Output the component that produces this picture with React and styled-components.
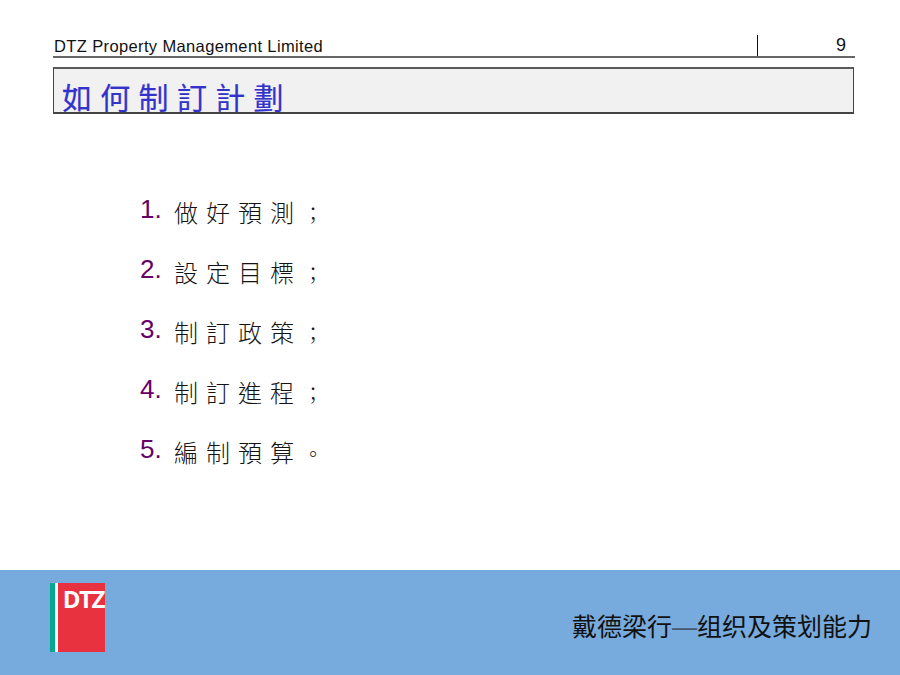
import React from 'react'
import styled, { createGlobalStyle } from 'styled-components'

const GlobalStyle = createGlobalStyle`
  html, body {
    margin: 0;
    padding: 0;
    background: #ffffff;
  }
`

const items = [
  { num: '1.', text: '做好預測', end: '；' },
  { num: '2.', text: '設定目標', end: '；' },
  { num: '3.', text: '制訂政策', end: '；' },
  { num: '4.', text: '制訂進程', end: '；' },
  { num: '5.', text: '編制預算', end: '。' },
]

const Slide = styled.div`
  width: 900px;
  height: 675px;
  display: flex;
  flex-direction: column;
  overflow: hidden;
  background: #ffffff;
`

const Main = styled.div`
  flex: 1;
  padding: 35px 45px 0 53px;
`

const Header = styled.div`
  display: flex;
  height: 21px;
  width: 802px;
  border-bottom: 2px solid #666666;
  font-family: "Liberation Sans", Arial, sans-serif;
  color: #111111;
`

const Company = styled.div`
  flex: 1;
  padding: 2px 0 0 1px;
  font-size: 16.5px;
  line-height: 18px;
  letter-spacing: 0.37px;
`

const PageNo = styled.div`
  box-sizing: border-box;
  width: 98px;
  border-left: 1px solid #111111;
  padding: 1px 9px 0 0;
  text-align: right;
  font-size: 18px;
  line-height: 19px;
`

const TitleBox = styled.div`
  box-sizing: border-box;
  width: 801px;
  height: 47px;
  margin-top: 9px;
  padding: 12px 0 0 8px;
  background: #f1f1f1;
  border: 1px solid #444444;
  border-top: 2px solid #5a5a5a;
  border-bottom-width: 2px;
  font-family: "Liberation Sans", "Noto Sans CJK TC", sans-serif;
  font-size: 30px;
  line-height: 36px;
  letter-spacing: 8.3px;
  color: #3333cc;
  -webkit-text-stroke: 0.2px #3333cc;
  white-space: nowrap;
  overflow: hidden;
`

const List = styled.div`
  display: flex;
  flex-direction: column;
  gap: 24px;
  margin-top: 79px;
  padding-left: 87px;
`

const Row = styled.div`
  display: flex;
  height: 36px;
  align-items: center;
`

const Num = styled.span`
  width: 34px;
  margin-top: -4px;
  font-family: "Liberation Sans", Arial, sans-serif;
  font-size: 26px;
  color: #660066;
`

const ItemText = styled.span`
  font-family: "Noto Sans CJK TC", sans-serif;
  font-size: 24px;
  font-weight: 300;
  letter-spacing: 8px;
  color: #111111;
  white-space: nowrap;
  opacity: 0.99;
`

const Punct = styled.span`
  margin-left: 1px;
  font-size: 20px;
`

const Footer = styled.div`
  height: 105px;
  display: flex;
  justify-content: space-between;
  padding: 13px 28px 0 50px;
  box-sizing: border-box;
  background: #77aadd;
`

const Logo = styled.div`
  width: 55px;
  height: 69px;
  box-sizing: border-box;
  border-left: 5px solid #00a88f;
  background: #e8323f;
  position: relative;
`

const LogoGap = styled.div`
  width: 3px;
  height: 100%;
  background: #ffffff;
`

const LogoMark = styled.span`
  position: absolute;
  top: 3px;
  right: 1px;
  font-family: "Open Sans", sans-serif;
  font-size: 24px;
  line-height: 26px;
  font-weight: 700;
  letter-spacing: -1.4px;
  color: #ffffff;
`

const Tagline = styled.div`
  margin-top: 27px;
  font-family: "Liberation Sans", "Noto Sans CJK SC", sans-serif;
  font-size: 25px;
  line-height: 34px;
  color: #111111;
  white-space: nowrap;
`

const Dash = styled.span`
  color: #46596e;
`

export default function App() {
  return (
    <Slide>
      <GlobalStyle />
      <Main>
        <Header>
          <Company>DTZ Property Management Limited</Company>
          <PageNo>9</PageNo>
        </Header>
        <TitleBox>如何制訂計劃</TitleBox>
        <List>
          {items.map((item) => (
            <Row key={item.num}>
              <Num>{item.num}</Num>
              <ItemText>
                {item.text}
                <Punct>{item.end}</Punct>
              </ItemText>
            </Row>
          ))}
        </List>
      </Main>
      <Footer>
        <Logo>
          <LogoGap />
          <LogoMark>DTZ</LogoMark>
        </Logo>
        <Tagline>
          戴德梁行<Dash>—</Dash>组织及策划能力
        </Tagline>
      </Footer>
    </Slide>
  )
}
